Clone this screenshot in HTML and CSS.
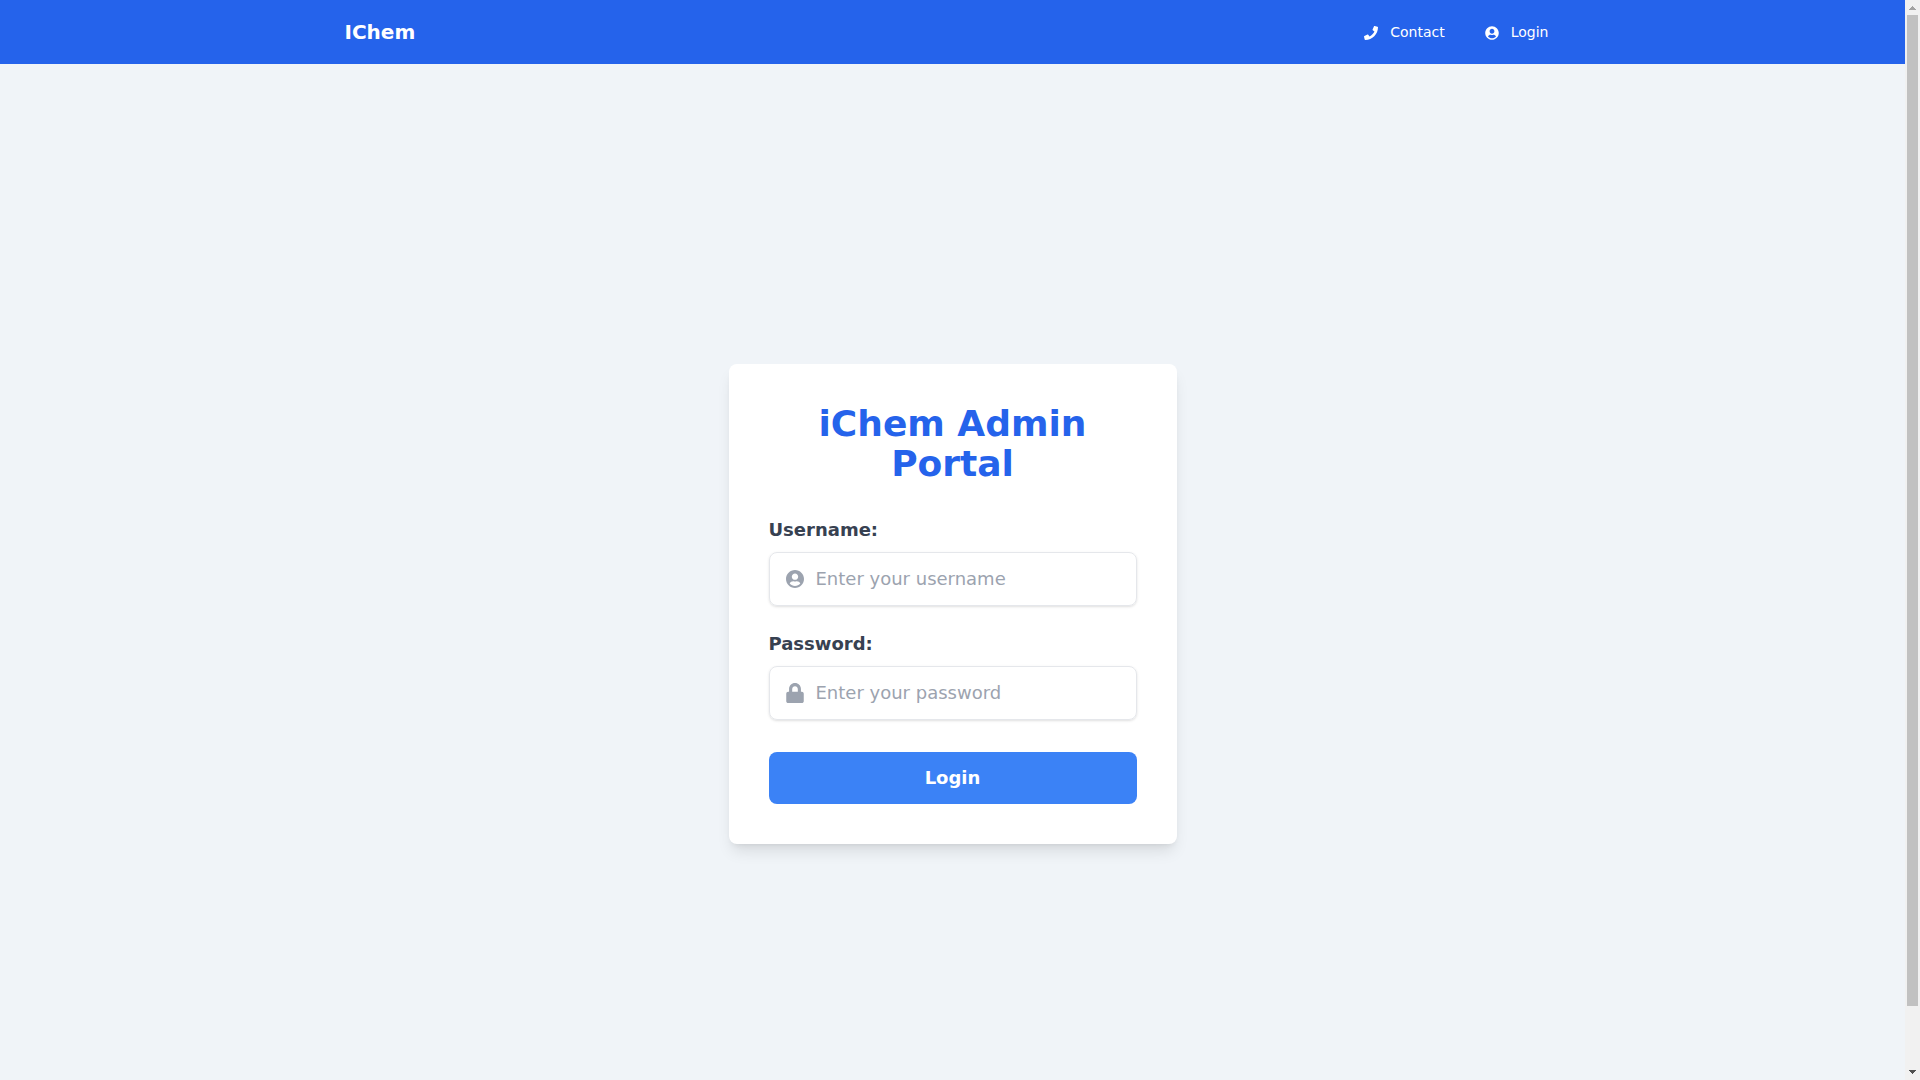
FILE: index.html
```html
<!DOCTYPE html>
<html lang="en">
<head>
    <meta charset="UTF-8">
    <meta name="viewport" content="width=device-width, initial-scale=1.0">
    <title>iChem Admin Portal</title>
    <link rel="stylesheet" href="styles.css">
</head>
<body>
    <div class="content">
        <header class="navbar">
            <nav class="navbar-inner">
                <a href="#" class="brand">IChem</a>
                <div class="nav-links">
                    <a href="#contact" class="nav-link">
                        <svg class="nav-icon" viewBox="0 0 512 512" aria-hidden="true"><path d="M493.4 24.6l-104-24c-11.3-2.6-22.9 3.3-27.5 13.9l-48 112c-4.2 9.8-1.4 21.3 6.9 28l60.6 49.6c-36 76.7-98.9 140.5-177.2 177.2l-49.6-60.6c-6.8-8.3-18.2-11.1-28-6.9l-112 48C3.9 366.5-2 378.1.6 389.4l24 104C27.1 504.2 36.7 512 48 512c256.1 0 464-207.5 464-464 0-11.2-7.7-20.9-18.6-23.4z"/></svg>
                        <span>Contact</span>
                    </a>
                    <a href="#login" class="nav-link">
                        <svg class="nav-icon" viewBox="0 0 496 512" aria-hidden="true"><path d="M248 8C111 8 0 119 0 256s111 248 248 248 248-111 248-248S385 8 248 8zm0 96c48.6 0 88 39.4 88 88s-39.4 88-88 88-88-39.4-88-88 39.4-88 88-88zm0 344c-58.7 0-111.3-26.6-146.5-68.2 18.8-35.4 55.6-59.8 98.5-59.8 2.4 0 4.8.4 7.1 1.1 13 4.2 26.6 6.9 40.9 6.9 14.3 0 28-2.7 40.9-6.9 2.3-.7 4.7-1.1 7.1-1.1 42.9 0 79.7 24.4 98.5 59.8C359.3 421.4 306.7 448 248 448z"/></svg>
                        <span>Login</span>
                    </a>
                </div>
            </nav>
        </header>

        <main class="page">
            <div class="card">
                <h1>iChem Admin Portal</h1>
                <form id="login">
                    <div class="form-group">
                        <label for="username">Username:</label>
                        <div class="field">
                            <svg class="field-icon" viewBox="0 0 496 512" aria-hidden="true"><path d="M248 8C111 8 0 119 0 256s111 248 248 248 248-111 248-248S385 8 248 8zm0 96c48.6 0 88 39.4 88 88s-39.4 88-88 88-88-39.4-88-88 39.4-88 88-88zm0 344c-58.7 0-111.3-26.6-146.5-68.2 18.8-35.4 55.6-59.8 98.5-59.8 2.4 0 4.8.4 7.1 1.1 13 4.2 26.6 6.9 40.9 6.9 14.3 0 28-2.7 40.9-6.9 2.3-.7 4.7-1.1 7.1-1.1 42.9 0 79.7 24.4 98.5 59.8C359.3 421.4 306.7 448 248 448z"/></svg>
                            <input type="text" id="username" placeholder="Enter your username">
                        </div>
                    </div>
                    <div class="form-group">
                        <label for="password">Password:</label>
                        <div class="field">
                            <svg class="field-icon" viewBox="0 0 448 512" aria-hidden="true"><path d="M400 224h-24v-72C376 68.2 307.8 0 224 0S72 68.2 72 152v72H48c-26.5 0-48 21.5-48 48v192c0 26.5 21.5 48 48 48h352c26.5 0 48-21.5 48-48V272c0-26.5-21.5-48-48-48zm-104 0H152v-72c0-39.7 32.3-72 72-72s72 32.3 72 72v72z"/></svg>
                            <input type="password" id="password" placeholder="Enter your password">
                        </div>
                    </div>
                    <button type="submit" class="login-btn">Login</button>
                </form>
            </div>
        </main>
    </div>

    <div class="scrollbar" aria-hidden="true">
        <svg class="arrow arrow-up" viewBox="0 0 15 15"><path d="M7 6h1v1h1v1h1v1h1v1H4V9h1V8h1V7h1z"/></svg>
        <div class="track">
            <div class="thumb"></div>
        </div>
        <svg class="arrow" viewBox="0 0 15 15"><path d="M4 5h7v1h-1v1H9v1H8v1H7V8H6V7H5V6H4z"/></svg>
    </div>
</body>
</html>
```
FILE: styles.css
```css
* {
    box-sizing: border-box;
}
html {
    scrollbar-width: none;
}
body {
    display: flex;
    align-items: flex-start;
    margin: 0;
    font-family: "DejaVu Sans", sans-serif;
    background-color: #f0f4f8;
}
.content {
    flex: 1;
    min-width: 0;
}
.navbar {
    background-color: #2563eb;
    color: #ffffff;
}
.navbar-inner {
    display: flex;
    justify-content: space-between;
    align-items: center;
    max-width: 1280px;
    height: 64px;
    margin: 0 auto;
    padding: 0 32px;
}
.brand {
    font-size: 20px;
    line-height: 28px;
    font-weight: bold;
    color: inherit;
    text-decoration: none;
}
.nav-links {
    display: flex;
    gap: 16px;
}
.nav-link {
    display: flex;
    align-items: center;
    gap: 12px;
    padding: 8px 12px;
    font-size: 14px;
    line-height: 20px;
    color: inherit;
    text-decoration: none;
}
.nav-icon {
    width: 14px;
    height: 14px;
    margin-top: 2px;
    fill: currentColor;
}
.page {
    display: flex;
    justify-content: center;
    align-items: center;
    min-height: 100vh;
}
.card {
    width: 100%;
    max-width: 448px;
    padding: 40px;
    background-color: #ffffff;
    border-radius: 8px;
    box-shadow: 0 10px 15px -3px rgba(0, 0, 0, 0.1), 0 4px 6px -4px rgba(0, 0, 0, 0.1);
}
h1 {
    margin: 0 0 32px;
    font-size: 36px;
    line-height: 40px;
    text-align: center;
    color: #2563eb;
}
.form-group {
    margin-bottom: 24px;
}
label {
    display: block;
    margin-bottom: 8px;
    font-size: 18px;
    line-height: 28px;
    font-weight: bold;
    color: #374151;
}
.field {
    display: flex;
    align-items: center;
    gap: 12px;
    padding: 12px 16px;
    border: 1px solid #e5e7eb;
    border-radius: 8px;
    box-shadow: 0 1px 3px rgba(0, 0, 0, 0.1), 0 1px 2px -1px rgba(0, 0, 0, 0.1);
}
.field:focus-within {
    border-color: #3b82f6;
}
.field-icon {
    flex-shrink: 0;
    width: 18px;
    height: 20px;
    fill: #9ca3af;
}
.field input {
    flex: 1;
    min-width: 0;
    height: 28px;
    padding: 0 0 2px;
    border: none;
    outline: none;
    background: transparent;
    font-family: inherit;
    font-size: 18px;
    color: #374151;
}
.field input::placeholder {
    color: #9ca3af;
}
.login-btn {
    width: 100%;
    margin-top: 8px;
    padding: 12px;
    border: none;
    border-radius: 8px;
    background-color: #3b82f6;
    color: #ffffff;
    font-family: inherit;
    font-size: 18px;
    line-height: 28px;
    font-weight: bold;
    cursor: pointer;
}
.login-btn:hover {
    background-color: #2563eb;
}
.scrollbar {
    position: sticky;
    top: 0;
    display: flex;
    flex-direction: column;
    width: 15px;
    height: 100vh;
    background-color: #f1f1f1;
}
.arrow {
    width: 15px;
    height: 15px;
    fill: #505050;
}
.arrow-up {
    fill: #a3a3a3;
}
.track {
    flex: 1;
    padding: 0 2px;
}
/* visible share of the page: 1080 of 1144 */
.thumb {
    height: 94.4%;
    background-color: #c1c1c1;
}
```
